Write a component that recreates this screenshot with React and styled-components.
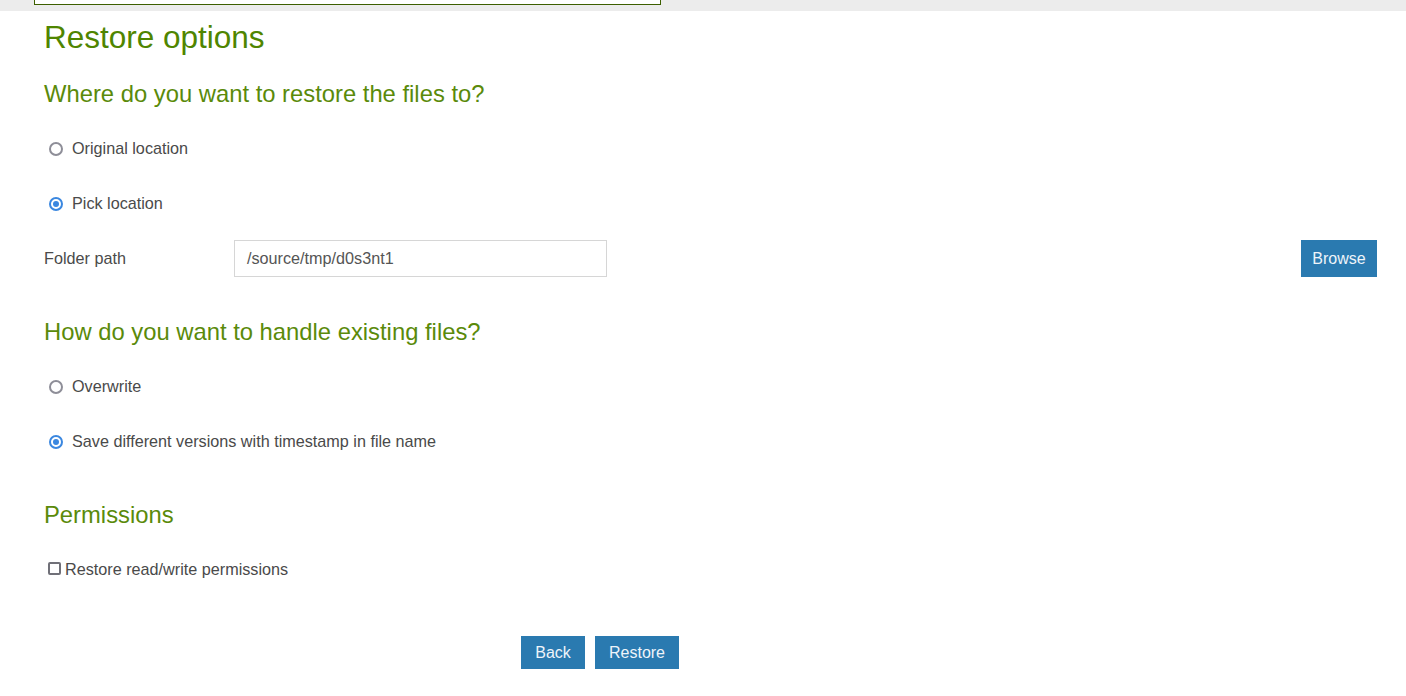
import styled, { createGlobalStyle } from 'styled-components'

const GlobalStyle = createGlobalStyle`
  body{
    margin:0;
    background:#fff;
    font-family:"Liberation Sans", Arial, sans-serif;
    color:#4a4a4a;
  }
`

const TopStrip = styled.div`
  height:11px;
  background:#ececec;
  padding-left:34px;
`

const TopBox = styled.div`
  width:625px;
  height:4px;
  background:#fff;
  border:1px solid #3d5f00;
  border-top:none;
`

const Page = styled.div`
  padding:6px 29px 0 44px;
`

const Title = styled.h1`
  margin:0;
  font-size:31.5px;
  line-height:40px;
  font-weight:400;
  color:#4f8500;
`

const Heading = styled.h2`
  margin:${p => p.first ? '22px' : '31px'} 0 12px;
  font-size:23.8px;
  line-height:30px;
  font-weight:400;
  color:#5a8a0a;
`

const Row = styled.label`
  display:flex;
  align-items:center;
  height:55px;
  font-size:16.2px;
  color:#4a4a4a;
`

const Radio = styled.span`
  box-sizing:border-box;
  width:14px;
  height:14px;
  margin:0 9px 0 5px;
  border-radius:50%;
  border:2px solid ${p => p.checked ? '#3a87e0' : '#8e8e98'};
  display:flex;
  align-items:center;
  justify-content:center;
  &::after{
    content:'';
    width:6px;
    height:6px;
    border-radius:50%;
    background:${p => p.checked ? '#3a87e0' : 'transparent'};
  }
`

const Checkbox = styled.span`
  box-sizing:border-box;
  width:13px;
  height:13px;
  margin:0 4px 0 4px;
  border:2px solid #707078;
  border-radius:2px;
  position:relative;
  top:-1px;
`

const FolderRow = styled.div`
  display:flex;
  align-items:center;
  height:55px;
  font-size:16.2px;
`

const FieldLabel = styled.span`
  width:190px;
  flex-shrink:0;
`

const PathInput = styled.div`
  box-sizing:border-box;
  width:373px;
  height:37px;
  border:1px solid #d6d6d6;
  padding:0 12px;
  display:flex;
  align-items:center;
  color:#555;
`

const Spacer = styled.div`
  flex:1;
`

const Button = styled.button`
  box-sizing:border-box;
  height:${p => p.tall ? '37px' : '33px'};
  width:${p => p.w}px;
  padding:0;
  border:none;
  background:#2a7ab0;
  color:#eef4fa;
  font-family:"Liberation Sans", Arial, sans-serif;
  font-size:16px;
`

const Actions = styled.div`
  display:flex;
  gap:10px;
  margin-top:39px;
  padding-left:477px;
`

const App = () => {
  return <>
    <GlobalStyle/>
    <TopStrip><TopBox/></TopStrip>
    <Page>
      <Title>Restore options</Title>

      <Heading first>Where do you want to restore the files to?</Heading>
      <Row><Radio/>Original location</Row>
      <Row><Radio checked/>Pick location</Row>
      <FolderRow>
        <FieldLabel>Folder path</FieldLabel>
        <PathInput>/source/tmp/d0s3nt1</PathInput>
        <Spacer/>
        <Button tall w={76}>Browse</Button>
      </FolderRow>

      <Heading>How do you want to handle existing files?</Heading>
      <Row><Radio/>Overwrite</Row>
      <Row><Radio checked/>Save different versions with timestamp in file name</Row>

      <Heading>Permissions</Heading>
      <Row><Checkbox/>Restore read/write permissions</Row>

      <Actions>
        <Button w={64}>Back</Button>
        <Button w={84}>Restore</Button>
      </Actions>
    </Page>
  </>
}

export default App
